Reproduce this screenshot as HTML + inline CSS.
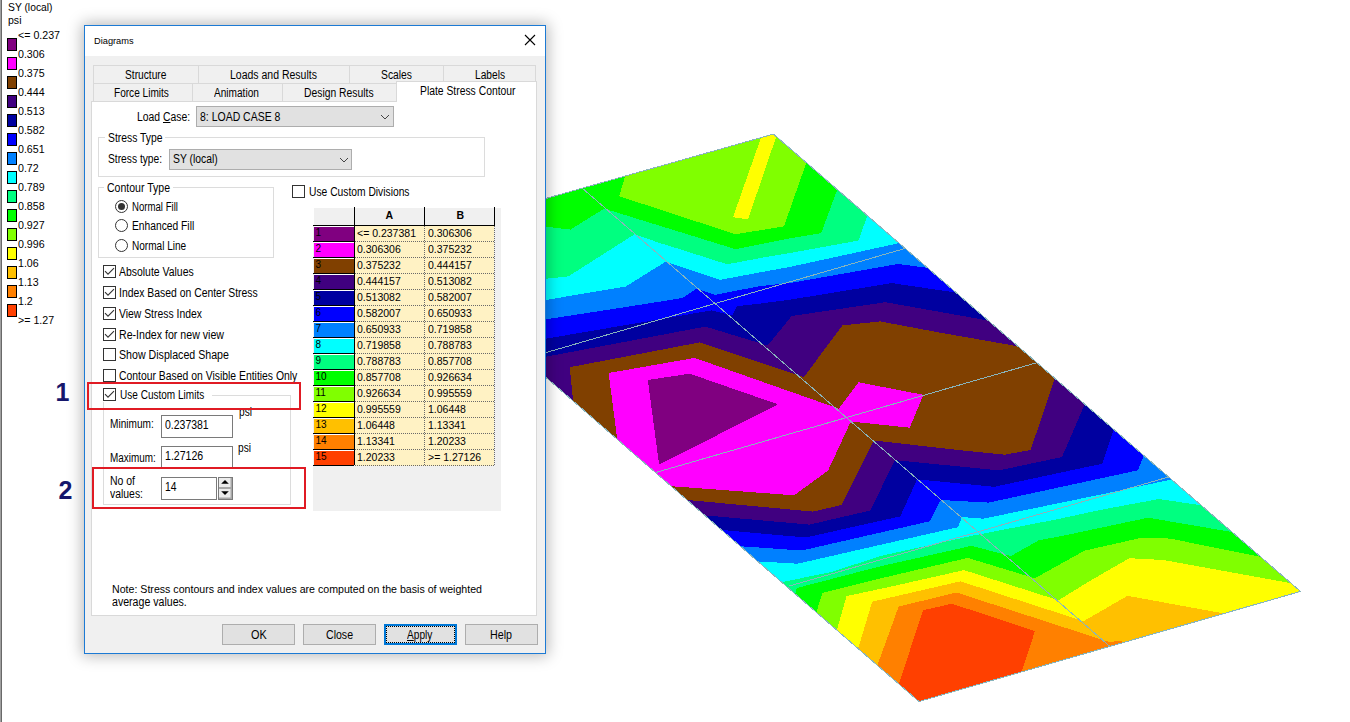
<!DOCTYPE html>
<html><head><meta charset="utf-8"><style>
html,body{margin:0;padding:0;}
body{width:1350px;height:722px;overflow:hidden;background:#fff;position:relative;font-family:"Liberation Sans",sans-serif;}
.t{position:absolute;white-space:pre;}
u{text-decoration:underline;text-underline-offset:1px;}
</style></head><body>
<div style="position:absolute;left:0;top:0;width:1px;height:722px;background:#a0a0a0"></div><div style="position:absolute;left:1px;top:0;width:1px;height:722px;background:#696969"></div>
<svg width="1350" height="722" viewBox="0 0 1350 722" style="position:absolute;left:0;top:0" shape-rendering="crispEdges">
<defs><clipPath id="pc"><polygon points="390.6,242.4 773.4,134.1 1300.5,591.4 919.0,701.5"/></clipPath></defs>
<g clip-path="url(#pc)">
<polygon fill="#400080" points="390.6,242.4 773.4,134.1 1300.5,591.4 919.0,701.5"/>
<polygon fill="#0000a0" points="380.0,388.0 631.9,340.5 705.4,326.6 767.7,345.5 791.7,316.0 885.5,302.2 988.0,320.5 1100.0,337.0 1500.0,-200.0 300.0,-200.0"/>
<polygon fill="#0000ff" points="380.0,367.0 711.7,310.4 732.2,315.4 737.2,306.1 760.0,303.6 790.0,299.7 891.8,283.1 956.1,292.6 1100.0,316.0 1500.0,-200.0 300.0,-200.0"/>
<polygon fill="#0080ff" points="380.0,345.0 640.0,304.8 682.4,298.0 696.7,288.6 714.8,294.9 760.0,286.1 790.0,283.0 898.0,264.0 925.0,267.5 1100.0,292.0 1500.0,-200.0 300.0,-200.0"/>
<polygon fill="#00ffff" points="380.0,328.0 625.7,286.5 665.5,261.8 719.8,279.9 760.0,272.4 790.0,266.9 897.0,243.6 1100.0,199.0 1500.0,-200.0 300.0,-200.0"/>
<polygon fill="#00ff80" points="380.0,296.0 568.3,276.4 634.7,234.2 660.0,243.1 682.4,250.0 727.2,264.3 760.0,258.1 790.0,253.0 858.5,240.5 880.0,180.0 1500.0,-200.0 300.0,-200.0"/>
<polygon fill="#00ff00" points="380.0,207.0 570.5,229.6 604.2,208.6 735.6,249.2 790.0,238.4 821.2,233.2 850.0,155.0 1500.0,-200.0 300.0,-200.0"/>
<polygon fill="#80ff00" points="630.0,160.0 619.1,196.2 735.6,234.3 784.0,226.3 806.2,163.1 820.0,124.0 1500.0,-200.0 300.0,-200.0"/>
<polygon fill="#ffff00" points="767.2,120.0 781.9,120.0 748.0,219.4 733.0,217.2"/>
<polygon fill="#804000" points="569.8,367.2 699.8,342.4 803.8,377.2 842.5,325.4 880.0,321.4 940.0,332.6 1018.9,346.5 1040.0,350.0 1060.0,365.0 1054.8,378.5 1030.6,450.0 1004.6,454.7 960.0,450.2 874.0,440.5 841.3,505.0 813.0,511.6 687.5,500.0 660.0,497.5 640.0,560.0 520.0,430.0 573.5,405.0"/>
<polygon fill="#ff00ff" points="608.6,373.0 694.7,357.9 838.8,408.7 858.6,382.3 923.4,394.8 909.7,427.7 852.4,421.7 849.9,423.5 828.1,470.5 794.2,495.3 672.7,486.3 650.0,500.0 600.0,460.0 618.0,445.0"/>
<polygon fill="#800080" points="647.8,380.0 689.7,373.7 777.9,404.3 659.1,464.7"/>
<polygon fill="#0000a0" points="680.0,513.2 809.5,524.6 870.3,510.5 894.9,460.1 999.0,470.4 1062.0,457.0 1084.6,404.5 1092.0,387.0 1500.0,900.0 300.0,900.0"/>
<polygon fill="#0000ff" points="700.0,528.0 805.6,537.5 900.3,516.4 917.0,479.3 994.4,486.8 1102.3,463.7 1113.7,429.5 1120.0,410.0 1500.0,900.0 300.0,900.0"/>
<polygon fill="#0080ff" points="720.0,544.8 801.8,550.5 929.7,521.3 940.8,500.0 988.7,502.6 1138.0,470.3 1143.8,455.3 1150.0,440.0 1500.0,900.0 300.0,900.0"/>
<polygon fill="#00ffff" points="740.0,560.4 797.5,563.7 958.0,527.2 962.0,517.0 983.2,518.7 1100.0,494.7 1172.2,479.4 1220.0,469.3 1500.0,900.0 300.0,900.0"/>
<polygon fill="#00ff80" points="760.0,586.6 832.3,571.8 880.0,556.1 973.5,535.5 1060.0,518.7 1100.0,510.0 1159.0,499.0 1202.8,505.6 1240.0,511.2 1500.0,900.0 300.0,900.0"/>
<polygon fill="#00ff00" points="790.0,612.0 796.8,588.0 880.0,566.4 971.6,545.8 1010.8,556.1 1038.9,540.2 1060.0,536.4 1148.1,517.7 1231.3,531.9 1270.0,538.5 1500.0,900.0 300.0,900.0"/>
<polygon fill="#80ff00" points="810.0,633.0 822.3,593.0 880.0,578.5 967.9,557.9 1034.8,578.3 1084.7,550.6 1142.7,537.5 1170.0,538.6 1261.9,557.0 1300.0,564.6 1500.0,900.0 300.0,900.0"/>
<polygon fill="#ffff00" points="831.0,650.0 846.6,596.1 890.0,586.8 964.1,570.1 1058.4,600.3 1090.0,580.8 1129.5,558.2 1163.4,560.0 1291.4,583.3 1330.0,590.3 1500.0,900.0 300.0,900.0"/>
<polygon fill="#ffc000" points="852.0,668.8 872.2,601.7 960.4,581.3 1083.5,621.2 1126.7,596.3 1130.2,596.3 1222.9,613.3 1260.0,620.1 1500.0,900.0 300.0,900.0"/>
<polygon fill="#ff8000" points="870.0,685.5 898.7,606.5 956.6,592.5 1108.5,641.8 1122.2,641.1 1124.0,670.0 1500.0,900.0 300.0,900.0"/>
<polygon fill="#ff4000" points="893.0,702.0 923.0,610.3 952.0,603.7 1034.9,631.2 1021.8,671.7 1015.0,692.0 1500.0,900.0 300.0,900.0"/>
</g>
<line x1="582.4" y1="188.3" x2="1110.0" y2="646.5" stroke="#88b4bc" stroke-width="1" shape-rendering="crispEdges"/>
<line x1="524.5" y1="358.8" x2="905.2" y2="248.4" stroke="#88b4bc" stroke-width="1" shape-rendering="crispEdges"/>
<line x1="655.4" y1="472.6" x2="1036.9" y2="362.7" stroke="#88b4bc" stroke-width="1" shape-rendering="crispEdges"/>
<line x1="788.7" y1="586.2" x2="1168.2" y2="477.1" stroke="#88b4bc" stroke-width="1" shape-rendering="crispEdges"/>
<polygon fill="none" stroke="#88b4bc" stroke-width="1" shape-rendering="crispEdges" points="390.6,242.4 773.4,134.1 1300.5,591.4 919.0,701.5"/>
</svg>
<div class="t" style="left:8.00px;top:1.67px;font-size:11.50px;line-height:11.50px;color:#000;transform:scaleX(0.8964);transform-origin:0 0;">SY (local)</div>
<div class="t" style="left:8.00px;top:14.57px;font-size:11.50px;line-height:11.50px;color:#000;transform:scaleX(0.9183);transform-origin:0 0;">psi</div>
<div class="t" style="left:18.30px;top:29.77px;font-size:11.50px;line-height:11.50px;color:#000;transform:scaleX(0.9250);transform-origin:0 0;">&lt;= 0.237</div>
<div class="t" style="left:18.30px;top:48.77px;font-size:11.50px;line-height:11.50px;color:#000;transform:scaleX(0.9250);transform-origin:0 0;">0.306</div>
<div class="t" style="left:18.30px;top:67.77px;font-size:11.50px;line-height:11.50px;color:#000;transform:scaleX(0.9250);transform-origin:0 0;">0.375</div>
<div class="t" style="left:18.30px;top:86.77px;font-size:11.50px;line-height:11.50px;color:#000;transform:scaleX(0.9250);transform-origin:0 0;">0.444</div>
<div class="t" style="left:18.30px;top:105.77px;font-size:11.50px;line-height:11.50px;color:#000;transform:scaleX(0.9250);transform-origin:0 0;">0.513</div>
<div class="t" style="left:18.30px;top:124.77px;font-size:11.50px;line-height:11.50px;color:#000;transform:scaleX(0.9250);transform-origin:0 0;">0.582</div>
<div class="t" style="left:18.30px;top:143.77px;font-size:11.50px;line-height:11.50px;color:#000;transform:scaleX(0.9250);transform-origin:0 0;">0.651</div>
<div class="t" style="left:18.30px;top:162.77px;font-size:11.50px;line-height:11.50px;color:#000;transform:scaleX(0.9250);transform-origin:0 0;">0.72</div>
<div class="t" style="left:18.30px;top:181.77px;font-size:11.50px;line-height:11.50px;color:#000;transform:scaleX(0.9250);transform-origin:0 0;">0.789</div>
<div class="t" style="left:18.30px;top:200.77px;font-size:11.50px;line-height:11.50px;color:#000;transform:scaleX(0.9250);transform-origin:0 0;">0.858</div>
<div class="t" style="left:18.30px;top:219.77px;font-size:11.50px;line-height:11.50px;color:#000;transform:scaleX(0.9250);transform-origin:0 0;">0.927</div>
<div class="t" style="left:18.30px;top:238.77px;font-size:11.50px;line-height:11.50px;color:#000;transform:scaleX(0.9250);transform-origin:0 0;">0.996</div>
<div class="t" style="left:18.30px;top:257.77px;font-size:11.50px;line-height:11.50px;color:#000;transform:scaleX(0.9250);transform-origin:0 0;">1.06</div>
<div class="t" style="left:18.30px;top:276.77px;font-size:11.50px;line-height:11.50px;color:#000;transform:scaleX(0.9250);transform-origin:0 0;">1.13</div>
<div class="t" style="left:18.30px;top:295.77px;font-size:11.50px;line-height:11.50px;color:#000;transform:scaleX(0.9250);transform-origin:0 0;">1.2</div>
<div class="t" style="left:18.30px;top:314.77px;font-size:11.50px;line-height:11.50px;color:#000;transform:scaleX(0.9250);transform-origin:0 0;">&gt;= 1.27</div>
<div style="position:absolute;left:7px;top:38px;width:10px;height:13px;box-sizing:border-box;background:#800080;border:1px solid #000;"></div>
<div style="position:absolute;left:7px;top:57px;width:10px;height:13px;box-sizing:border-box;background:#ff00ff;border:1px solid #000;"></div>
<div style="position:absolute;left:7px;top:76px;width:10px;height:13px;box-sizing:border-box;background:#804000;border:1px solid #000;"></div>
<div style="position:absolute;left:7px;top:95px;width:10px;height:13px;box-sizing:border-box;background:#400080;border:1px solid #000;"></div>
<div style="position:absolute;left:7px;top:114px;width:10px;height:13px;box-sizing:border-box;background:#0000a0;border:1px solid #000;"></div>
<div style="position:absolute;left:7px;top:133px;width:10px;height:13px;box-sizing:border-box;background:#0000ff;border:1px solid #000;"></div>
<div style="position:absolute;left:7px;top:152px;width:10px;height:13px;box-sizing:border-box;background:#0080ff;border:1px solid #000;"></div>
<div style="position:absolute;left:7px;top:171px;width:10px;height:13px;box-sizing:border-box;background:#00ffff;border:1px solid #000;"></div>
<div style="position:absolute;left:7px;top:190px;width:10px;height:13px;box-sizing:border-box;background:#00ff80;border:1px solid #000;"></div>
<div style="position:absolute;left:7px;top:209px;width:10px;height:13px;box-sizing:border-box;background:#00ff00;border:1px solid #000;"></div>
<div style="position:absolute;left:7px;top:228px;width:10px;height:13px;box-sizing:border-box;background:#80ff00;border:1px solid #000;"></div>
<div style="position:absolute;left:7px;top:247px;width:10px;height:13px;box-sizing:border-box;background:#ffff00;border:1px solid #000;"></div>
<div style="position:absolute;left:7px;top:266px;width:10px;height:13px;box-sizing:border-box;background:#ffc000;border:1px solid #000;"></div>
<div style="position:absolute;left:7px;top:285px;width:10px;height:13px;box-sizing:border-box;background:#ff8000;border:1px solid #000;"></div>
<div style="position:absolute;left:7px;top:304px;width:10px;height:13px;box-sizing:border-box;background:#ff4000;border:1px solid #000;"></div>
<div style="position:absolute;left:84px;top:25px;width:462px;height:629px;box-sizing:border-box;background:#f0f0f0;border:1px solid #1c7ad4;box-shadow:0 0 14px 2px rgba(0,0,0,0.28);"></div>
<div style="position:absolute;left:85px;top:26px;width:460px;height:30px;box-sizing:border-box;background:#fff;"></div>
<div class="t" style="left:94.00px;top:36.36px;font-size:9.50px;line-height:9.50px;color:#000;transform:scaleX(0.9742);transform-origin:0 0;">Diagrams</div>
<svg style="position:absolute;left:524px;top:34px" width="12" height="12"><path d="M1 1L11 11M11 1L1 11" stroke="#000" stroke-width="1.1"/></svg>
<div style="position:absolute;left:91px;top:101px;width:446px;height:515px;box-sizing:border-box;background:#fff;border:1px solid #d9d9d9;"></div>
<div style="position:absolute;left:93px;top:65px;width:106px;height:19px;box-sizing:border-box;background:#f0f0f0;border:1px solid #d9d9d9;"></div>
<div style="position:absolute;left:198px;top:65px;width:152px;height:19px;box-sizing:border-box;background:#f0f0f0;border:1px solid #d9d9d9;"></div>
<div style="position:absolute;left:349px;top:65px;width:95px;height:19px;box-sizing:border-box;background:#f0f0f0;border:1px solid #d9d9d9;"></div>
<div style="position:absolute;left:443px;top:65px;width:93px;height:19px;box-sizing:border-box;background:#f0f0f0;border:1px solid #d9d9d9;"></div>
<div class="t" style="left:124.60px;top:69.14px;font-size:12.00px;line-height:12.00px;color:#000;transform:scaleX(0.8503);transform-origin:0 0;">Structure</div>
<div class="t" style="left:230.20px;top:69.14px;font-size:12.00px;line-height:12.00px;color:#000;transform:scaleX(0.8742);transform-origin:0 0;">Loads and Results</div>
<div class="t" style="left:381.40px;top:69.14px;font-size:12.00px;line-height:12.00px;color:#000;transform:scaleX(0.8607);transform-origin:0 0;">Scales</div>
<div class="t" style="left:475.00px;top:69.14px;font-size:12.00px;line-height:12.00px;color:#000;transform:scaleX(0.8484);transform-origin:0 0;">Labels</div>
<div style="position:absolute;left:93px;top:83px;width:100px;height:19px;box-sizing:border-box;background:#f0f0f0;border:1px solid #d9d9d9;"></div>
<div style="position:absolute;left:192px;top:83px;width:91px;height:19px;box-sizing:border-box;background:#f0f0f0;border:1px solid #d9d9d9;"></div>
<div style="position:absolute;left:282px;top:83px;width:116px;height:19px;box-sizing:border-box;background:#f0f0f0;border:1px solid #d9d9d9;"></div>
<div class="t" style="left:114.40px;top:87.04px;font-size:12.00px;line-height:12.00px;color:#000;transform:scaleX(0.8401);transform-origin:0 0;">Force Limits</div>
<div class="t" style="left:214.00px;top:87.04px;font-size:12.00px;line-height:12.00px;color:#000;transform:scaleX(0.8414);transform-origin:0 0;">Animation</div>
<div class="t" style="left:304.40px;top:87.04px;font-size:12.00px;line-height:12.00px;color:#000;transform:scaleX(0.8624);transform-origin:0 0;">Design Results</div>
<div style="position:absolute;left:396px;top:81px;width:141px;height:21px;box-sizing:border-box;background:#fff;border:1px solid #d9d9d9;border-bottom:none;"></div>
<div class="t" style="left:419.50px;top:85.44px;font-size:12.00px;line-height:12.00px;color:#000;transform:scaleX(0.8625);transform-origin:0 0;">Plate Stress Contour</div>
<div class="t" style="left:136.60px;top:111.44px;font-size:12.00px;line-height:12.00px;color:#000;transform:scaleX(0.8651);transform-origin:0 0;">Load <u>C</u>ase:</div>
<div style="position:absolute;left:196px;top:106px;width:198px;height:21px;box-sizing:border-box;background:#e1e1e1;border:1px solid #adadad;"></div>
<div class="t" style="left:200.10px;top:111.44px;font-size:12.00px;line-height:12.00px;color:#000;transform:scaleX(0.8735);transform-origin:0 0;">8: LOAD CASE 8</div>
<svg style="position:absolute;left:380px;top:113.5px" width="10" height="7"><path d="M1 1L5 5L9 1" fill="none" stroke="#444" stroke-width="1"/></svg>
<div style="position:absolute;left:98px;top:137px;width:387px;height:40px;box-sizing:border-box;border:1px solid #dcdcdc;"></div>
<div style="position:absolute;left:105px;top:134px;width:60px;height:8px;box-sizing:border-box;background:#fff;"></div>
<div class="t" style="left:107.50px;top:132.44px;font-size:12.00px;line-height:12.00px;color:#000;transform:scaleX(0.8631);transform-origin:0 0;">Stress Type</div>
<div class="t" style="left:107.50px;top:153.24px;font-size:12.00px;line-height:12.00px;color:#000;transform:scaleX(0.8539);transform-origin:0 0;">Stress type:</div>
<div style="position:absolute;left:169px;top:149px;width:183px;height:21px;box-sizing:border-box;background:#e1e1e1;border:1px solid #adadad;"></div>
<div class="t" style="left:173.00px;top:153.44px;font-size:12.00px;line-height:12.00px;color:#000;transform:scaleX(0.8629);transform-origin:0 0;">SY (local)</div>
<svg style="position:absolute;left:338.5px;top:156.5px" width="10" height="7"><path d="M1 1L5 5L9 1" fill="none" stroke="#444" stroke-width="1"/></svg>
<div style="position:absolute;left:98px;top:187px;width:176px;height:71px;box-sizing:border-box;border:1px solid #dcdcdc;"></div>
<div style="position:absolute;left:104px;top:184px;width:69px;height:8px;box-sizing:border-box;background:#fff;"></div>
<div class="t" style="left:107.00px;top:182.44px;font-size:12.00px;line-height:12.00px;color:#000;transform:scaleX(0.8771);transform-origin:0 0;">Contour Type</div>
<svg style="position:absolute;left:114px;top:198.9px" width="15" height="15"><circle cx="7.5" cy="7.5" r="6" fill="#fff" stroke="#333" stroke-width="1"/><circle cx="7.5" cy="7.5" r="3.5" fill="#333"/></svg>
<div class="t" style="left:131.80px;top:201.24px;font-size:12.00px;line-height:12.00px;color:#000;transform:scaleX(0.8005);transform-origin:0 0;">Normal Fill</div>
<svg style="position:absolute;left:114px;top:217.9px" width="15" height="15"><circle cx="7.5" cy="7.5" r="6" fill="#fff" stroke="#333" stroke-width="1"/></svg>
<div class="t" style="left:131.80px;top:219.94px;font-size:12.00px;line-height:12.00px;color:#000;transform:scaleX(0.8554);transform-origin:0 0;">Enhanced Fill</div>
<svg style="position:absolute;left:114px;top:237.8px" width="15" height="15"><circle cx="7.5" cy="7.5" r="6" fill="#fff" stroke="#333" stroke-width="1"/></svg>
<div class="t" style="left:131.80px;top:239.84px;font-size:12.00px;line-height:12.00px;color:#000;transform:scaleX(0.8378);transform-origin:0 0;">Normal Line</div>
<svg style="position:absolute;left:103px;top:265px" width="13" height="13"><rect x="0.5" y="0.5" width="12" height="12" fill="#fff" stroke="#333" stroke-width="1"/><path d="M2 6.2L5 9.2L11 3.2" fill="none" stroke="#333" stroke-width="1.1"/></svg>
<div class="t" style="left:119.30px;top:266.24px;font-size:12.00px;line-height:12.00px;color:#000;transform:scaleX(0.8703);transform-origin:0 0;">Absolute Values</div>
<svg style="position:absolute;left:103px;top:286px" width="13" height="13"><rect x="0.5" y="0.5" width="12" height="12" fill="#fff" stroke="#333" stroke-width="1"/><path d="M2 6.2L5 9.2L11 3.2" fill="none" stroke="#333" stroke-width="1.1"/></svg>
<div class="t" style="left:119.30px;top:287.24px;font-size:12.00px;line-height:12.00px;color:#000;transform:scaleX(0.8664);transform-origin:0 0;">Index Based on Center Stress</div>
<svg style="position:absolute;left:103px;top:307px" width="13" height="13"><rect x="0.5" y="0.5" width="12" height="12" fill="#fff" stroke="#333" stroke-width="1"/><path d="M2 6.2L5 9.2L11 3.2" fill="none" stroke="#333" stroke-width="1.1"/></svg>
<div class="t" style="left:119.30px;top:308.24px;font-size:12.00px;line-height:12.00px;color:#000;transform:scaleX(0.8651);transform-origin:0 0;">View Stress Index</div>
<svg style="position:absolute;left:103px;top:328px" width="13" height="13"><rect x="0.5" y="0.5" width="12" height="12" fill="#fff" stroke="#333" stroke-width="1"/><path d="M2 6.2L5 9.2L11 3.2" fill="none" stroke="#333" stroke-width="1.1"/></svg>
<div class="t" style="left:119.30px;top:329.24px;font-size:12.00px;line-height:12.00px;color:#000;transform:scaleX(0.8844);transform-origin:0 0;">Re-Index for new view</div>
<svg style="position:absolute;left:103px;top:348px" width="13" height="13"><rect x="0.5" y="0.5" width="12" height="12" fill="#fff" stroke="#333" stroke-width="1"/></svg>
<div class="t" style="left:119.30px;top:349.24px;font-size:12.00px;line-height:12.00px;color:#000;transform:scaleX(0.8857);transform-origin:0 0;">Show Displaced Shape</div>
<svg style="position:absolute;left:103px;top:369px" width="13" height="13"><rect x="0.5" y="0.5" width="12" height="12" fill="#fff" stroke="#333" stroke-width="1"/></svg>
<div class="t" style="left:119.30px;top:370.24px;font-size:12.00px;line-height:12.00px;color:#000;transform:scaleX(0.8660);transform-origin:0 0;">Contour Based on Visible Entities Only</div>
<svg style="position:absolute;left:292px;top:185px" width="13" height="13"><rect x="0.5" y="0.5" width="12" height="12" fill="#fff" stroke="#333" stroke-width="1"/></svg>
<div class="t" style="left:308.50px;top:185.84px;font-size:12.00px;line-height:12.00px;color:#000;transform:scaleX(0.8563);transform-origin:0 0;">Use Custom Divisions</div>
<div style="position:absolute;left:103px;top:395px;width:188px;height:110px;box-sizing:border-box;border:1px solid #dcdcdc;"></div>
<div style="position:absolute;left:101px;top:388px;width:111px;height:14px;box-sizing:border-box;background:#fff;"></div>
<svg style="position:absolute;left:103px;top:388px" width="13" height="13"><rect x="0.5" y="0.5" width="12" height="12" fill="#fff" stroke="#333" stroke-width="1"/><path d="M2 6.2L5 9.2L11 3.2" fill="none" stroke="#333" stroke-width="1.1"/></svg>
<div class="t" style="left:119.80px;top:389.14px;font-size:12.00px;line-height:12.00px;color:#000;transform:scaleX(0.8362);transform-origin:0 0;">Use Custom Limits</div>
<div class="t" style="left:110.00px;top:418.14px;font-size:12.00px;line-height:12.00px;color:#000;transform:scaleX(0.8403);transform-origin:0 0;">Minimum:</div>
<div style="position:absolute;left:161px;top:415px;width:72px;height:23px;box-sizing:border-box;background:#fff;border:1px solid #7a7a7a;"></div>
<div class="t" style="left:165.30px;top:419.34px;font-size:12.00px;line-height:12.00px;color:#000;transform:scaleX(0.8731);transform-origin:0 0;">0.237381</div>
<div class="t" style="left:238.60px;top:406.14px;font-size:12.00px;line-height:12.00px;color:#000;transform:scaleX(0.8474);transform-origin:0 0;">psi</div>
<div class="t" style="left:109.50px;top:451.74px;font-size:12.00px;line-height:12.00px;color:#000;transform:scaleX(0.8258);transform-origin:0 0;">Maximum:</div>
<div style="position:absolute;left:161px;top:446px;width:72px;height:22px;box-sizing:border-box;background:#fff;border:1px solid #7a7a7a;"></div>
<div class="t" style="left:165.30px;top:450.14px;font-size:12.00px;line-height:12.00px;color:#000;transform:scaleX(0.8806);transform-origin:0 0;">1.27126</div>
<div class="t" style="left:237.50px;top:442.44px;font-size:12.00px;line-height:12.00px;color:#000;transform:scaleX(0.8474);transform-origin:0 0;">psi</div>
<div class="t" style="left:110.00px;top:475.04px;font-size:12.00px;line-height:12.00px;color:#000;transform:scaleX(0.8716);transform-origin:0 0;">No of</div>
<div class="t" style="left:110.00px;top:487.94px;font-size:12.00px;line-height:12.00px;color:#000;transform:scaleX(0.8679);transform-origin:0 0;">values:</div>
<div style="position:absolute;left:161px;top:477px;width:56px;height:23px;box-sizing:border-box;background:#fff;border:1px solid #7a7a7a;"></div>
<div class="t" style="left:165.30px;top:481.44px;font-size:12.00px;line-height:12.00px;color:#000;transform:scaleX(0.8615);transform-origin:0 0;">14</div>
<svg style="position:absolute;left:218px;top:477px" width="15" height="23"><rect x="0.5" y="0.5" width="14" height="22" fill="#a8a8a8" stroke="#7a7a7a"/><rect x="1" y="1" width="11.5" height="9" fill="#ececec"/><rect x="1" y="12" width="11.5" height="8.5" fill="#ececec"/><path d="M7 3L10.8 6.8H3.2Z" fill="#000"/><path d="M3.2 14.2H10.8L7 18Z" fill="#000"/></svg>
<div style="position:absolute;left:87px;top:382px;width:214px;height:28px;box-sizing:border-box;border:2px solid #e01b24;"></div>
<div style="position:absolute;left:92px;top:467px;width:214px;height:42px;box-sizing:border-box;border:2px solid #e01b24;"></div>
<div class="t" style="left:55.50px;top:380.34px;font-size:25.00px;line-height:25.00px;color:#15166b;font-weight:bold;">1</div>
<div class="t" style="left:58.50px;top:478.24px;font-size:25.00px;line-height:25.00px;color:#15166b;font-weight:bold;">2</div>
<div style="position:absolute;left:313px;top:208px;width:188px;height:303px;box-sizing:border-box;background:#f0f0f0;"></div>
<div style="position:absolute;left:313px;top:208px;width:1px;height:17px;box-sizing:border-box;background:#fff;"></div>
<div style="position:absolute;left:314px;top:226px;width:40px;height:1px;box-sizing:border-box;background:#fff;"></div>
<div style="position:absolute;left:314px;top:227px;width:40px;height:14px;box-sizing:border-box;background:#800080;"></div>
<div style="position:absolute;left:355px;top:226px;width:139px;height:16px;box-sizing:border-box;background:#fff2c4;"></div>
<div style="position:absolute;left:314px;top:242px;width:40px;height:1px;box-sizing:border-box;background:#fff;"></div>
<div style="position:absolute;left:314px;top:243px;width:40px;height:14px;box-sizing:border-box;background:#ff00ff;"></div>
<div style="position:absolute;left:355px;top:242px;width:139px;height:16px;box-sizing:border-box;background:#fff2c4;"></div>
<div style="position:absolute;left:314px;top:258px;width:40px;height:1px;box-sizing:border-box;background:#fff;"></div>
<div style="position:absolute;left:314px;top:259px;width:40px;height:14px;box-sizing:border-box;background:#804000;"></div>
<div style="position:absolute;left:355px;top:258px;width:139px;height:16px;box-sizing:border-box;background:#fff2c4;"></div>
<div style="position:absolute;left:314px;top:274px;width:40px;height:1px;box-sizing:border-box;background:#fff;"></div>
<div style="position:absolute;left:314px;top:275px;width:40px;height:14px;box-sizing:border-box;background:#400080;"></div>
<div style="position:absolute;left:355px;top:274px;width:139px;height:16px;box-sizing:border-box;background:#fff2c4;"></div>
<div style="position:absolute;left:314px;top:290px;width:40px;height:1px;box-sizing:border-box;background:#fff;"></div>
<div style="position:absolute;left:314px;top:291px;width:40px;height:14px;box-sizing:border-box;background:#0000a0;"></div>
<div style="position:absolute;left:355px;top:290px;width:139px;height:16px;box-sizing:border-box;background:#fff2c4;"></div>
<div style="position:absolute;left:314px;top:306px;width:40px;height:1px;box-sizing:border-box;background:#fff;"></div>
<div style="position:absolute;left:314px;top:307px;width:40px;height:14px;box-sizing:border-box;background:#0000ff;"></div>
<div style="position:absolute;left:355px;top:306px;width:139px;height:16px;box-sizing:border-box;background:#fff2c4;"></div>
<div style="position:absolute;left:314px;top:322px;width:40px;height:1px;box-sizing:border-box;background:#fff;"></div>
<div style="position:absolute;left:314px;top:323px;width:40px;height:14px;box-sizing:border-box;background:#0080ff;"></div>
<div style="position:absolute;left:355px;top:322px;width:139px;height:16px;box-sizing:border-box;background:#fff2c4;"></div>
<div style="position:absolute;left:314px;top:338px;width:40px;height:1px;box-sizing:border-box;background:#fff;"></div>
<div style="position:absolute;left:314px;top:339px;width:40px;height:14px;box-sizing:border-box;background:#00ffff;"></div>
<div style="position:absolute;left:355px;top:338px;width:139px;height:16px;box-sizing:border-box;background:#fff2c4;"></div>
<div style="position:absolute;left:314px;top:354px;width:40px;height:1px;box-sizing:border-box;background:#fff;"></div>
<div style="position:absolute;left:314px;top:355px;width:40px;height:14px;box-sizing:border-box;background:#00ff80;"></div>
<div style="position:absolute;left:355px;top:354px;width:139px;height:16px;box-sizing:border-box;background:#fff2c4;"></div>
<div style="position:absolute;left:314px;top:370px;width:40px;height:1px;box-sizing:border-box;background:#fff;"></div>
<div style="position:absolute;left:314px;top:371px;width:40px;height:14px;box-sizing:border-box;background:#00ff00;"></div>
<div style="position:absolute;left:355px;top:370px;width:139px;height:16px;box-sizing:border-box;background:#fff2c4;"></div>
<div style="position:absolute;left:314px;top:386px;width:40px;height:1px;box-sizing:border-box;background:#fff;"></div>
<div style="position:absolute;left:314px;top:387px;width:40px;height:14px;box-sizing:border-box;background:#80ff00;"></div>
<div style="position:absolute;left:355px;top:386px;width:139px;height:16px;box-sizing:border-box;background:#fff2c4;"></div>
<div style="position:absolute;left:314px;top:402px;width:40px;height:1px;box-sizing:border-box;background:#fff;"></div>
<div style="position:absolute;left:314px;top:403px;width:40px;height:14px;box-sizing:border-box;background:#ffff00;"></div>
<div style="position:absolute;left:355px;top:402px;width:139px;height:16px;box-sizing:border-box;background:#fff2c4;"></div>
<div style="position:absolute;left:314px;top:418px;width:40px;height:1px;box-sizing:border-box;background:#fff;"></div>
<div style="position:absolute;left:314px;top:419px;width:40px;height:14px;box-sizing:border-box;background:#ffc000;"></div>
<div style="position:absolute;left:355px;top:418px;width:139px;height:16px;box-sizing:border-box;background:#fff2c4;"></div>
<div style="position:absolute;left:314px;top:434px;width:40px;height:1px;box-sizing:border-box;background:#fff;"></div>
<div style="position:absolute;left:314px;top:435px;width:40px;height:14px;box-sizing:border-box;background:#ff8000;"></div>
<div style="position:absolute;left:355px;top:434px;width:139px;height:16px;box-sizing:border-box;background:#fff2c4;"></div>
<div style="position:absolute;left:314px;top:450px;width:40px;height:1px;box-sizing:border-box;background:#fff;"></div>
<div style="position:absolute;left:314px;top:451px;width:40px;height:14px;box-sizing:border-box;background:#ff4000;"></div>
<div style="position:absolute;left:355px;top:450px;width:139px;height:16px;box-sizing:border-box;background:#fff2c4;"></div>
<div style="position:absolute;left:313px;top:225px;width:182px;height:1px;box-sizing:border-box;background:#000;"></div>
<div style="position:absolute;left:354px;top:207px;width:1px;height:258px;box-sizing:border-box;background:#000;"></div>
<div style="position:absolute;left:424px;top:207px;width:1px;height:18px;box-sizing:border-box;background:#000;"></div>
<div style="position:absolute;left:494px;top:207px;width:1px;height:18px;box-sizing:border-box;background:#000;"></div>
<div style="position:absolute;left:355px;top:241px;width:139px;height:1px;box-sizing:border-box;background:repeating-linear-gradient(90deg,#6a6a6a 0 1px,transparent 1px 2px);"></div>
<div style="position:absolute;left:313px;top:241px;width:41px;height:1px;box-sizing:border-box;background:#000;"></div>
<div style="position:absolute;left:355px;top:257px;width:139px;height:1px;box-sizing:border-box;background:repeating-linear-gradient(90deg,#6a6a6a 0 1px,transparent 1px 2px);"></div>
<div style="position:absolute;left:313px;top:257px;width:41px;height:1px;box-sizing:border-box;background:#000;"></div>
<div style="position:absolute;left:355px;top:273px;width:139px;height:1px;box-sizing:border-box;background:repeating-linear-gradient(90deg,#6a6a6a 0 1px,transparent 1px 2px);"></div>
<div style="position:absolute;left:313px;top:273px;width:41px;height:1px;box-sizing:border-box;background:#000;"></div>
<div style="position:absolute;left:355px;top:289px;width:139px;height:1px;box-sizing:border-box;background:repeating-linear-gradient(90deg,#6a6a6a 0 1px,transparent 1px 2px);"></div>
<div style="position:absolute;left:313px;top:289px;width:41px;height:1px;box-sizing:border-box;background:#000;"></div>
<div style="position:absolute;left:355px;top:305px;width:139px;height:1px;box-sizing:border-box;background:repeating-linear-gradient(90deg,#6a6a6a 0 1px,transparent 1px 2px);"></div>
<div style="position:absolute;left:313px;top:305px;width:41px;height:1px;box-sizing:border-box;background:#000;"></div>
<div style="position:absolute;left:355px;top:321px;width:139px;height:1px;box-sizing:border-box;background:repeating-linear-gradient(90deg,#6a6a6a 0 1px,transparent 1px 2px);"></div>
<div style="position:absolute;left:313px;top:321px;width:41px;height:1px;box-sizing:border-box;background:#000;"></div>
<div style="position:absolute;left:355px;top:337px;width:139px;height:1px;box-sizing:border-box;background:repeating-linear-gradient(90deg,#6a6a6a 0 1px,transparent 1px 2px);"></div>
<div style="position:absolute;left:313px;top:337px;width:41px;height:1px;box-sizing:border-box;background:#000;"></div>
<div style="position:absolute;left:355px;top:353px;width:139px;height:1px;box-sizing:border-box;background:repeating-linear-gradient(90deg,#6a6a6a 0 1px,transparent 1px 2px);"></div>
<div style="position:absolute;left:313px;top:353px;width:41px;height:1px;box-sizing:border-box;background:#000;"></div>
<div style="position:absolute;left:355px;top:369px;width:139px;height:1px;box-sizing:border-box;background:repeating-linear-gradient(90deg,#6a6a6a 0 1px,transparent 1px 2px);"></div>
<div style="position:absolute;left:313px;top:369px;width:41px;height:1px;box-sizing:border-box;background:#000;"></div>
<div style="position:absolute;left:355px;top:385px;width:139px;height:1px;box-sizing:border-box;background:repeating-linear-gradient(90deg,#6a6a6a 0 1px,transparent 1px 2px);"></div>
<div style="position:absolute;left:313px;top:385px;width:41px;height:1px;box-sizing:border-box;background:#000;"></div>
<div style="position:absolute;left:355px;top:401px;width:139px;height:1px;box-sizing:border-box;background:repeating-linear-gradient(90deg,#6a6a6a 0 1px,transparent 1px 2px);"></div>
<div style="position:absolute;left:313px;top:401px;width:41px;height:1px;box-sizing:border-box;background:#000;"></div>
<div style="position:absolute;left:355px;top:417px;width:139px;height:1px;box-sizing:border-box;background:repeating-linear-gradient(90deg,#6a6a6a 0 1px,transparent 1px 2px);"></div>
<div style="position:absolute;left:313px;top:417px;width:41px;height:1px;box-sizing:border-box;background:#000;"></div>
<div style="position:absolute;left:355px;top:433px;width:139px;height:1px;box-sizing:border-box;background:repeating-linear-gradient(90deg,#6a6a6a 0 1px,transparent 1px 2px);"></div>
<div style="position:absolute;left:313px;top:433px;width:41px;height:1px;box-sizing:border-box;background:#000;"></div>
<div style="position:absolute;left:355px;top:449px;width:139px;height:1px;box-sizing:border-box;background:repeating-linear-gradient(90deg,#6a6a6a 0 1px,transparent 1px 2px);"></div>
<div style="position:absolute;left:313px;top:449px;width:41px;height:1px;box-sizing:border-box;background:#000;"></div>
<div style="position:absolute;left:355px;top:465px;width:139px;height:1px;box-sizing:border-box;background:repeating-linear-gradient(90deg,#6a6a6a 0 1px,transparent 1px 2px);"></div>
<div style="position:absolute;left:313px;top:465px;width:41px;height:1px;box-sizing:border-box;background:#000;"></div>
<div style="position:absolute;left:424px;top:226px;width:1px;height:240px;box-sizing:border-box;background:repeating-linear-gradient(180deg,#6a6a6a 0 1px,transparent 1px 2px);"></div>
<div style="position:absolute;left:494px;top:226px;width:1px;height:240px;box-sizing:border-box;background:repeating-linear-gradient(180deg,#6a6a6a 0 1px,transparent 1px 2px);"></div>
<div class="t" style="left:385.50px;top:210.31px;font-size:10.50px;line-height:10.50px;color:#000;font-weight:bold;">A</div>
<div class="t" style="left:456.50px;top:210.31px;font-size:10.50px;line-height:10.50px;color:#000;font-weight:bold;">B</div>
<div class="t" style="left:315.50px;top:228.13px;font-size:10.00px;line-height:10.00px;color:#000;">1</div>
<div class="t" style="left:357.00px;top:227.51px;font-size:10.50px;line-height:10.50px;color:#000;">&lt;= 0.237381</div>
<div class="t" style="left:428.00px;top:227.51px;font-size:10.50px;line-height:10.50px;color:#000;">0.306306</div>
<div class="t" style="left:315.50px;top:244.13px;font-size:10.00px;line-height:10.00px;color:#000;">2</div>
<div class="t" style="left:357.00px;top:243.51px;font-size:10.50px;line-height:10.50px;color:#000;">0.306306</div>
<div class="t" style="left:428.00px;top:243.51px;font-size:10.50px;line-height:10.50px;color:#000;">0.375232</div>
<div class="t" style="left:315.50px;top:260.14px;font-size:10.00px;line-height:10.00px;color:#000;">3</div>
<div class="t" style="left:357.00px;top:259.51px;font-size:10.50px;line-height:10.50px;color:#000;">0.375232</div>
<div class="t" style="left:428.00px;top:259.51px;font-size:10.50px;line-height:10.50px;color:#000;">0.444157</div>
<div class="t" style="left:315.50px;top:276.14px;font-size:10.00px;line-height:10.00px;color:#000;">4</div>
<div class="t" style="left:357.00px;top:275.51px;font-size:10.50px;line-height:10.50px;color:#000;">0.444157</div>
<div class="t" style="left:428.00px;top:275.51px;font-size:10.50px;line-height:10.50px;color:#000;">0.513082</div>
<div class="t" style="left:315.50px;top:292.14px;font-size:10.00px;line-height:10.00px;color:#000;">5</div>
<div class="t" style="left:357.00px;top:291.51px;font-size:10.50px;line-height:10.50px;color:#000;">0.513082</div>
<div class="t" style="left:428.00px;top:291.51px;font-size:10.50px;line-height:10.50px;color:#000;">0.582007</div>
<div class="t" style="left:315.50px;top:308.14px;font-size:10.00px;line-height:10.00px;color:#000;">6</div>
<div class="t" style="left:357.00px;top:307.51px;font-size:10.50px;line-height:10.50px;color:#000;">0.582007</div>
<div class="t" style="left:428.00px;top:307.51px;font-size:10.50px;line-height:10.50px;color:#000;">0.650933</div>
<div class="t" style="left:315.50px;top:324.14px;font-size:10.00px;line-height:10.00px;color:#000;">7</div>
<div class="t" style="left:357.00px;top:323.51px;font-size:10.50px;line-height:10.50px;color:#000;">0.650933</div>
<div class="t" style="left:428.00px;top:323.51px;font-size:10.50px;line-height:10.50px;color:#000;">0.719858</div>
<div class="t" style="left:315.50px;top:340.14px;font-size:10.00px;line-height:10.00px;color:#000;">8</div>
<div class="t" style="left:357.00px;top:339.51px;font-size:10.50px;line-height:10.50px;color:#000;">0.719858</div>
<div class="t" style="left:428.00px;top:339.51px;font-size:10.50px;line-height:10.50px;color:#000;">0.788783</div>
<div class="t" style="left:315.50px;top:356.14px;font-size:10.00px;line-height:10.00px;color:#000;">9</div>
<div class="t" style="left:357.00px;top:355.51px;font-size:10.50px;line-height:10.50px;color:#000;">0.788783</div>
<div class="t" style="left:428.00px;top:355.51px;font-size:10.50px;line-height:10.50px;color:#000;">0.857708</div>
<div class="t" style="left:315.50px;top:372.14px;font-size:10.00px;line-height:10.00px;color:#000;">10</div>
<div class="t" style="left:357.00px;top:371.51px;font-size:10.50px;line-height:10.50px;color:#000;">0.857708</div>
<div class="t" style="left:428.00px;top:371.51px;font-size:10.50px;line-height:10.50px;color:#000;">0.926634</div>
<div class="t" style="left:315.50px;top:388.14px;font-size:10.00px;line-height:10.00px;color:#000;">11</div>
<div class="t" style="left:357.00px;top:387.51px;font-size:10.50px;line-height:10.50px;color:#000;">0.926634</div>
<div class="t" style="left:428.00px;top:387.51px;font-size:10.50px;line-height:10.50px;color:#000;">0.995559</div>
<div class="t" style="left:315.50px;top:404.14px;font-size:10.00px;line-height:10.00px;color:#000;">12</div>
<div class="t" style="left:357.00px;top:403.51px;font-size:10.50px;line-height:10.50px;color:#000;">0.995559</div>
<div class="t" style="left:428.00px;top:403.51px;font-size:10.50px;line-height:10.50px;color:#000;">1.06448</div>
<div class="t" style="left:315.50px;top:420.14px;font-size:10.00px;line-height:10.00px;color:#000;">13</div>
<div class="t" style="left:357.00px;top:419.51px;font-size:10.50px;line-height:10.50px;color:#000;">1.06448</div>
<div class="t" style="left:428.00px;top:419.51px;font-size:10.50px;line-height:10.50px;color:#000;">1.13341</div>
<div class="t" style="left:315.50px;top:436.14px;font-size:10.00px;line-height:10.00px;color:#000;">14</div>
<div class="t" style="left:357.00px;top:435.51px;font-size:10.50px;line-height:10.50px;color:#000;">1.13341</div>
<div class="t" style="left:428.00px;top:435.51px;font-size:10.50px;line-height:10.50px;color:#000;">1.20233</div>
<div class="t" style="left:315.50px;top:452.14px;font-size:10.00px;line-height:10.00px;color:#000;">15</div>
<div class="t" style="left:357.00px;top:451.51px;font-size:10.50px;line-height:10.50px;color:#000;">1.20233</div>
<div class="t" style="left:428.00px;top:451.51px;font-size:10.50px;line-height:10.50px;color:#000;">&gt;= 1.27126</div>
<div class="t" style="left:112.40px;top:583.67px;font-size:11.50px;line-height:11.50px;color:#000;transform:scaleX(0.9231);transform-origin:0 0;">Note: Stress contours and index values are computed on the basis of weighted</div>
<div class="t" style="left:112.40px;top:595.94px;font-size:12.00px;line-height:12.00px;color:#000;transform:scaleX(0.8829);transform-origin:0 0;">average values.</div>
<div style="position:absolute;left:222px;top:624px;width:73px;height:21px;box-sizing:border-box;background:#e1e1e1;border:1px solid #adadad;"></div>
<div style="position:absolute;left:303px;top:624px;width:73px;height:21px;box-sizing:border-box;background:#e1e1e1;border:1px solid #adadad;"></div>
<div style="position:absolute;left:465px;top:624px;width:73px;height:21px;box-sizing:border-box;background:#e1e1e1;border:1px solid #adadad;"></div>
<div style="position:absolute;left:384px;top:624px;width:73px;height:21px;box-sizing:border-box;background:#e1e1e1;border:2px solid #0078d7;"></div>
<div style="position:absolute;left:386px;top:626px;width:69px;height:17px;box-sizing:border-box;border:1px dotted #000;"></div>
<div class="t" style="left:250.60px;top:629.14px;font-size:12.00px;line-height:12.00px;color:#000;transform:scaleX(0.9055);transform-origin:0 0;">OK</div>
<div class="t" style="left:325.50px;top:629.14px;font-size:12.00px;line-height:12.00px;color:#000;transform:scaleX(0.8800);transform-origin:0 0;">Close</div>
<div class="t" style="left:407.00px;top:629.14px;font-size:12.00px;line-height:12.00px;color:#000;transform:scaleX(0.8428);transform-origin:0 0;"><u>A</u>pply</div>
<div class="t" style="left:489.50px;top:629.14px;font-size:12.00px;line-height:12.00px;color:#000;transform:scaleX(0.8914);transform-origin:0 0;">Help</div>
</body></html>
